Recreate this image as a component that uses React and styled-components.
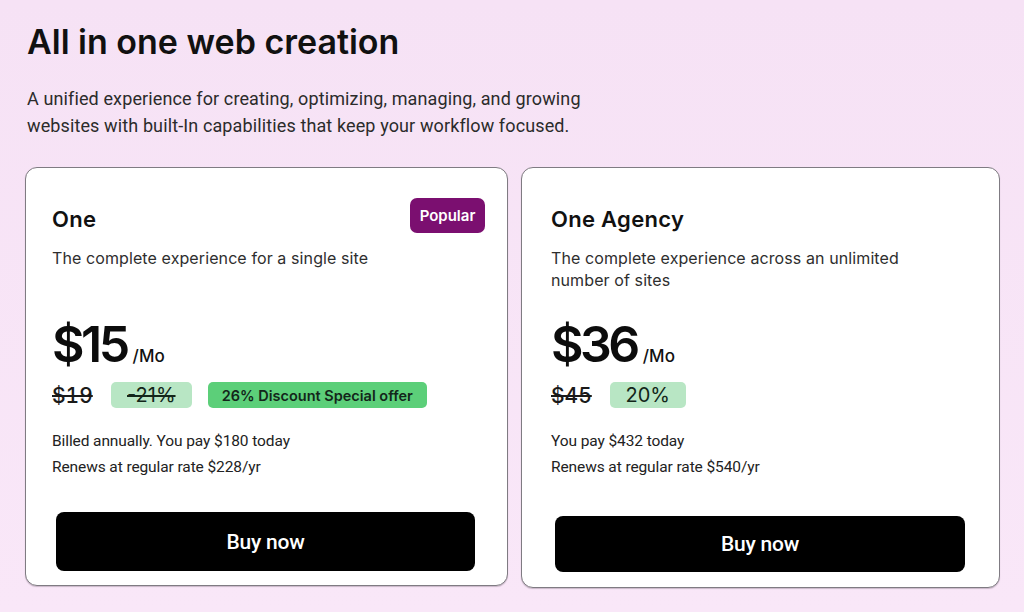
import React from "react";
import styled, { createGlobalStyle } from "styled-components";

const GlobalStyle = createGlobalStyle`
  html, body {
    margin: 0;
    padding: 0;
    background: #f8e5f7;
  }
  body {
    font-family: Inter, "Noto Sans", sans-serif;
    color: #111;
    -webkit-font-smoothing: antialiased;
  }
  * { box-sizing: border-box; }
`;

const Page = styled.main`
  width: 1024px;
  min-height: 612px;
  padding: 22px 0 0 25px;
  background: linear-gradient(180deg, #f6e2f5 0%, #f9e7f8 100%);
`;

const Title = styled.h1`
  margin: 0 0 23px 2px;
  font-family: Inter, sans-serif;
  font-size: 34px;
  line-height: 40px;
  font-weight: 600;
  letter-spacing: 0;
  color: #111;
`;

const Lead = styled.p`
  margin: 0 0 28px 2px;
  width: 590px;
  font-family: Roboto, sans-serif;
  font-size: 18px;
  line-height: 27px;
  letter-spacing: 0.12px;
  color: #2b2b2b;
`;

const Plans = styled.section`
  display: grid;
  grid-template-columns: 483px 479px;
  column-gap: 13px;
  align-items: start;
`;

const Card = styled.article`
  display: flex;
  flex-direction: column;
  height: ${(p) => p.$height}px;
  padding: 30px 26px 0 ${(p) => p.$inset}px;
  background: #fff;
  border: 1px solid #7f7b82;
  border-radius: 12px;
  box-shadow: 0 1px 1px rgba(60, 40, 60, 0.25);
`;

const Header = styled.div`
  display: flex;
  justify-content: space-between;
  align-items: flex-start;
  min-height: 35px;
`;

const PlanName = styled.h2`
  margin: 7px 0 0;
  font-family: Inter, sans-serif;
  font-size: 22px;
  line-height: 28px;
  font-weight: 600;
  letter-spacing: 0.3px;
  color: #111;
`;

const Badge = styled.span`
  display: inline-flex;
  align-items: center;
  justify-content: center;
  width: 75px;
  height: 35px;
  margin-right: -4px;
  border-radius: 7px;
  background: #7b0f70;
  color: #fff;
  font-family: Inter, sans-serif;
  font-size: 15px;
  font-weight: 600;
`;

const Description = styled.p`
  margin: 14px 0 0;
  min-height: 44px;
  width: 370px;
  font-family: Inter, sans-serif;
  font-size: 16px;
  line-height: 22px;
  letter-spacing: 0.1px;
  color: #2e2e2e;
`;

const PriceRow = styled.div`
  display: flex;
  align-items: baseline;
  margin-top: 24px;
  gap: 6px;
`;

const Amount = styled.span`
  font-family: Inter, sans-serif;
  font-size: 50px;
  line-height: 58px;
  font-weight: 600;
  letter-spacing: -3.5px;
  color: #0c0c0c;
`;

const Period = styled.span`
  font-family: Inter, sans-serif;
  font-size: 17px;
  font-weight: 500;
  color: #111;
`;

const DealRow = styled.div`
  display: flex;
  align-items: center;
  gap: 16px;
  margin-top: 9px;
  height: 26px;
`;

const OldPrice = styled.s`
  font-family: Inter, sans-serif;
  font-size: 21px;
  font-weight: 500;
  font-variant-numeric: tabular-nums;
  color: #1a1a1a;
  text-decoration-thickness: 2px;
  margin-right: 2px;
`;

const Pill = styled.span`
  display: inline-flex;
  align-items: center;
  justify-content: center;
  width: ${(p) => p.$width}px;
  height: 26px;
  border-radius: 5px;
  background: ${(p) => (p.$strong ? "#5ccf79" : "#b8e6c4")};
  color: #13261a;
  font-family: Inter, sans-serif;
  font-size: ${(p) => (p.$strong ? "14.5px" : "20px")};
  font-weight: ${(p) => (p.$strong ? 600 : 400)};
  text-decoration: ${(p) => (p.$struck ? "line-through" : "none")};
  text-decoration-thickness: 2px;
`;

const Billing = styled.div`
  margin-top: 20px;
  font-family: Roboto, sans-serif;
  font-size: 15.5px;
  line-height: 26px;
  color: #222;
  letter-spacing: -0.1px;
`;

const BuyButton = styled.button`
  display: flex;
  align-items: center;
  justify-content: center;
  margin: ${(p) => p.$top}px ${(p) => p.$right}px 0 ${(p) => p.$left}px;
  height: ${(p) => p.$h}px;
  border: none;
  border-radius: 8px;
  background: #000;
  color: #fff;
  font-family: Roboto, sans-serif;
  font-size: 21px;
  font-weight: 500;
  letter-spacing: -0.2px;
  cursor: pointer;
`;

const plans = [
  {
    name: "One",
    badge: "Popular",
    description: "The complete experience for a single site",
    price: "$15",
    old: "$19",
    off: "21%",
    offWidth: 81,
    struck: true,
    promo: "26% Discount Special offer",
    lines: ["Billed annually. You pay $180 today", "Renews at regular rate $228/yr"],
    height: 419,
    inset: 26,
    button: { top: 32, left: 4, right: 6, h: 59 },
  },
  {
    name: "One Agency",
    description: "The complete experience across an unlimited number of sites",
    price: "$36",
    old: "$45",
    off: "20%",
    offWidth: 76,
    lines: ["You pay $432 today", "Renews at regular rate $540/yr"],
    height: 421,
    inset: 29,
    button: { top: 36, left: 4, right: 8, h: 56 },
  },
];

export default function App() {
  return (
    <>
      <GlobalStyle />
      <Page>
        <Title>All in one web creation</Title>
        <Lead>
          A unified experience for creating, optimizing, managing, and growing
          <br />
          websites with built-In capabilities that keep your workflow focused.
        </Lead>
        <Plans>
          {plans.map((plan) => (
            <Card key={plan.name} $height={plan.height} $inset={plan.inset}>
              <Header>
                <PlanName>{plan.name}</PlanName>
                {plan.badge && <Badge>{plan.badge}</Badge>}
              </Header>
              <Description>{plan.description}</Description>
              <PriceRow>
                <Amount>{plan.price}</Amount>
                <Period>/Mo</Period>
              </PriceRow>
              <DealRow>
                <OldPrice>{plan.old}</OldPrice>
                <Pill $width={plan.offWidth} $struck={plan.struck}>
                  {plan.struck ? `-${plan.off}` : plan.off}
                </Pill>
                {plan.promo && (
                  <Pill $width={219} $strong>
                    {plan.promo}
                  </Pill>
                )}
              </DealRow>
              <Billing>
                {plan.lines.map((line) => (
                  <div key={line}>{line}</div>
                ))}
              </Billing>
              <BuyButton
                $top={plan.button.top}
                $left={plan.button.left}
                $right={plan.button.right}
                $h={plan.button.h}
              >
                Buy now
              </BuyButton>
            </Card>
          ))}
        </Plans>
      </Page>
    </>
  );
}
